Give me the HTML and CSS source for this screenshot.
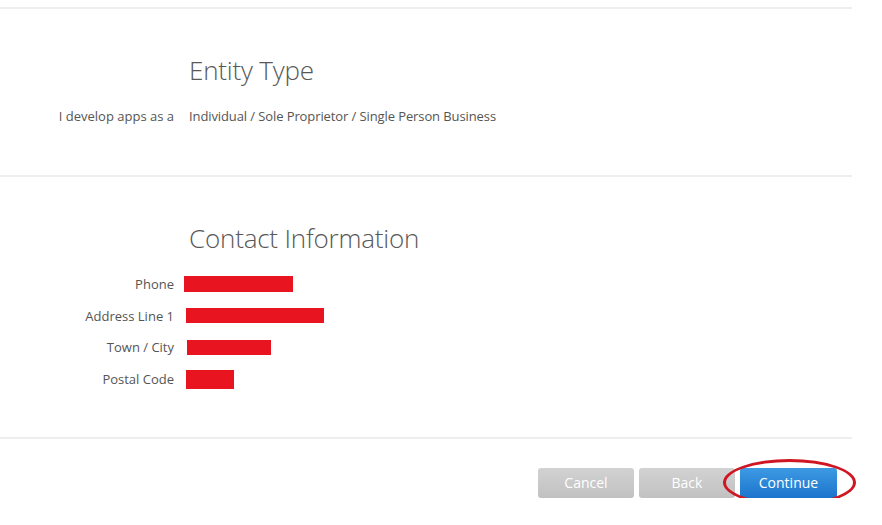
FILE: index.html
```html
<!DOCTYPE html>
<html>
<head>
<meta charset="utf-8">
<link rel="stylesheet" href="styles.css">
</head>
<body>
<div class="page">
  <section class="section entity">
    <h2 class="heading">Entity Type</h2>
    <div class="row">
      <span class="label">I develop apps as a</span>
      <span class="value">Individual / Sole Proprietor / Single Person Business</span>
    </div>
  </section>
  <section class="section contact">
    <h2 class="heading">Contact Information</h2>
    <div class="fields">
      <div class="row field"><span class="label">Phone</span><span class="redact" style="width:109px;margin-left:-5px;height:16px"></span></div>
      <div class="row field"><span class="label">Address Line 1</span><span class="redact" style="width:138px;margin-left:-3px;height:15px"></span></div>
      <div class="row field"><span class="label">Town / City</span><span class="redact" style="width:84px;margin-left:-2px;height:15px"></span></div>
      <div class="row field"><span class="label">Postal Code</span><span class="redact" style="width:48px;margin-left:-3px;height:19px"></span></div>
    </div>
  </section>
  <section class="section actions">
    <button class="btn btn-gray">Cancel</button>
    <button class="btn btn-gray">Back</button>
    <span class="primary-wrap">
      <button class="btn btn-blue">Continue</button>
      <span class="circle"></span>
    </span>
  </section>
</div>
</body>
</html>
```
FILE: styles.css
```css
html, body {
  margin: 0;
  padding: 0;
  background: #fff;
}
body {
  font-family: "Open Sans", "Liberation Sans", sans-serif;
  color: #555;
}
.page {
  width: 852px;
  padding-top: 7px;
}
.section {
  border-top: 2px solid #eeeeee;
}
.heading {
  margin: 0 0 0 189px;
  font-weight: 300;
  font-size: 26px;
  line-height: 32px;
  color: #585858;
  letter-spacing: -0.2px;
}
.entity {
  padding: 45px 0 50px;
}
.entity .heading {
  margin-bottom: 21px;
}
.row {
  display: grid;
  grid-template-columns: 174px 1fr;
  column-gap: 15px;
  align-items: center;
  font-size: 13px;
  line-height: 18px;
}
.label {
  text-align: right;
  color: #555;
}
.value {
  color: #555;
  letter-spacing: -0.1px;
}
.contact {
  padding: 45px 0 48px;
}
.contact .heading {
  margin-bottom: 21px;
}
.fields {
  display: flex;
  flex-direction: column;
  gap: 13.5px;
}
.field .redact {
  display: block;
  background: #e8141f;
}
.actions {
  display: flex;
  justify-content: flex-end;
  gap: 5px;
  padding: 29px 15px 0 0;
}
.btn {
  width: 96px;
  height: 30px;
  border: none;
  border-radius: 3px;
  font-family: "Open Sans", "Liberation Sans", sans-serif;
  font-size: 14px;
  color: #fff;
  padding: 0;
}
.btn-gray {
  background: linear-gradient(#d2d2d2, #c1c1c1);
}
.btn-blue {
  width: 97px;
  background: linear-gradient(#3d9ae3, #1c74cc);
}
.primary-wrap {
  position: relative;
  display: flex;
}
.circle {
  position: absolute;
  left: -17px;
  top: -9px;
  width: 127px;
  height: 41px;
  border: 3px solid #d01623;
  border-radius: 50%;
  pointer-events: none;
}
```
